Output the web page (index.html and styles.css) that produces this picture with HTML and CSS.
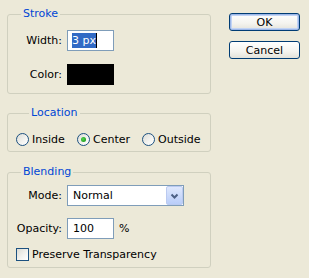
FILE: index.html
```html
<!DOCTYPE html>
<html>
<head>
<meta charset="utf-8">
<link rel="stylesheet" href="styles.css">
</head>
<body>
<div class="dialog">
  <div class="groups">
    <fieldset class="group stroke">
      <legend>Stroke</legend>
      <div class="form">
        <span class="label">Width:</span>
        <div class="input"><span class="sel">3 px</span><span class="caret"></span></div>
        <span class="label">Color:</span>
        <div class="swatch"></div>
      </div>
    </fieldset>
    <fieldset class="group location">
      <legend>Location</legend>
      <div class="radios">
        <div class="radio-item w1"><span class="radio"></span><span>Inside</span></div>
        <div class="radio-item w2"><span class="radio on"></span><span>Center</span></div>
        <div class="radio-item"><span class="radio"></span><span>Outside</span></div>
      </div>
    </fieldset>
    <fieldset class="group blending">
      <legend>Blending</legend>
      <div class="form form-b">
        <span class="label">Mode:</span>
        <div class="select"><span class="sel-text">Normal</span>
          <span class="drop"><svg width="9" height="6" viewBox="0 0 9 6"><path d="M1.5 1.5 L4.5 4.5 L7.5 1.5" fill="none" stroke="#4d6185" stroke-width="2"/></svg></span>
        </div>
        <span class="label">Opacity:</span>
        <div class="opacity-row"><div class="input short"><span class="plain">100</span></div><span class="pct">%</span></div>
      </div>
      <div class="check-row"><span class="checkbox"></span><span>Preserve Transparency</span></div>
    </fieldset>
  </div>
  <div class="buttons">
    <div class="btn default">OK</div>
    <div class="btn">Cancel</div>
  </div>
</div>
</body>
</html>
```
FILE: styles.css
```css
html, body {
  margin: 0;
  padding: 0;
  background: #ece9d8;
}
body {
  font-family: "DejaVu Sans", sans-serif;
  font-size: 11px;
  color: #000;
}
.dialog {
  display: flex;
  padding-left: 7px;
}
.groups {
  width: 204px;
  display: flex;
  flex-direction: column;
}
.group {
  margin: 0;
  padding: 0;
  border: 1px solid #d0d0bf;
  border-radius: 3px;
  min-width: 0;
}
.group legend {
  margin-left: 13px;
  padding: 0 2px;
  color: #0046d5;
  line-height: 14px;
  height: 14px;
}
.stroke { margin-top: 7px; padding: 9px 0 8px; }
.location { margin-top: 12px; padding: 12px 0 5px 8px; }
.blending { margin-top: 13px; padding: 6px 0 5px; }

.form {
  display: grid;
  grid-template-columns: 54px auto;
  column-gap: 5px;
  row-gap: 13px;
  align-items: center;
}
.form-b { row-gap: 12px; }
.label { text-align: right; }
.input {
  box-sizing: border-box;
  width: 47px;
  height: 21px;
  border: 1px solid #7f9db9;
  background: #fff;
  display: flex;
  align-items: center;
  padding-left: 4px;
}
.sel {
  background: #316ac5;
  color: #fff;
  line-height: 15px;
}
.caret {
  width: 1px;
  height: 15px;
  background: #000;
}
.plain { padding-left: 1px; }
.swatch {
  width: 47px;
  height: 21px;
  background: #000;
}
.radios {
  display: flex;
  align-items: center;
  height: 14px;
}
.radio-item {
  display: flex;
  align-items: center;
  gap: 3px;
}
.w1 { width: 61px; }
.w2 { width: 65px; }
.radio {
  box-sizing: border-box;
  width: 13px;
  height: 13px;
  border-radius: 50%;
  border: 1px solid #1c5180;
  background: linear-gradient(135deg, #dcdcd5 0%, #f4f4f1 60%, #ffffff 100%);
  position: relative;
}
.radio.on::after {
  content: "";
  position: absolute;
  left: 3px;
  top: 3px;
  width: 5px;
  height: 5px;
  border-radius: 50%;
  background: radial-gradient(circle at 40% 40%, #55d551 0%, #21a121 70%);
}
.select {
  box-sizing: border-box;
  width: 117px;
  height: 21px;
  border: 1px solid #7f9db9;
  background: #fff;
  display: flex;
  align-items: center;
  justify-content: space-between;
}
.sel-text { padding-left: 5px; }
.drop {
  box-sizing: border-box;
  width: 17px;
  height: 19px;
  border: 1px solid #bbcaf0;
  border-radius: 2px;
  background: linear-gradient(#dfe8fd, #b9cdf9);
  display: flex;
  align-items: center;
  justify-content: center;
}
.opacity-row {
  display: flex;
  align-items: center;
  gap: 5px;
}
.check-row {
  display: flex;
  align-items: center;
  gap: 3px;
  padding-left: 8px;
  margin-top: 8px;
  height: 15px;
}
.checkbox {
  box-sizing: border-box;
  width: 13px;
  height: 13px;
  border: 1px solid #1c5180;
  background: linear-gradient(135deg, #dcdcd5 0%, #f4f4f1 60%, #ffffff 100%);
}
.buttons {
  margin-left: 18px;
  padding-top: 13px;
  display: flex;
  flex-direction: column;
  gap: 10px;
}
.btn {
  box-sizing: border-box;
  width: 71px;
  height: 18px;
  border: 1px solid #003c74;
  border-radius: 3px;
  background: linear-gradient(#ffffff 0%, #f4f3ee 60%, #e3e2da 100%);
  display: flex;
  align-items: center;
  justify-content: center;
}
.btn.default {
  box-shadow: inset 0 0 0 1px #9db7e8, inset 0 0 0 2px #c2d4f5;
}
```
